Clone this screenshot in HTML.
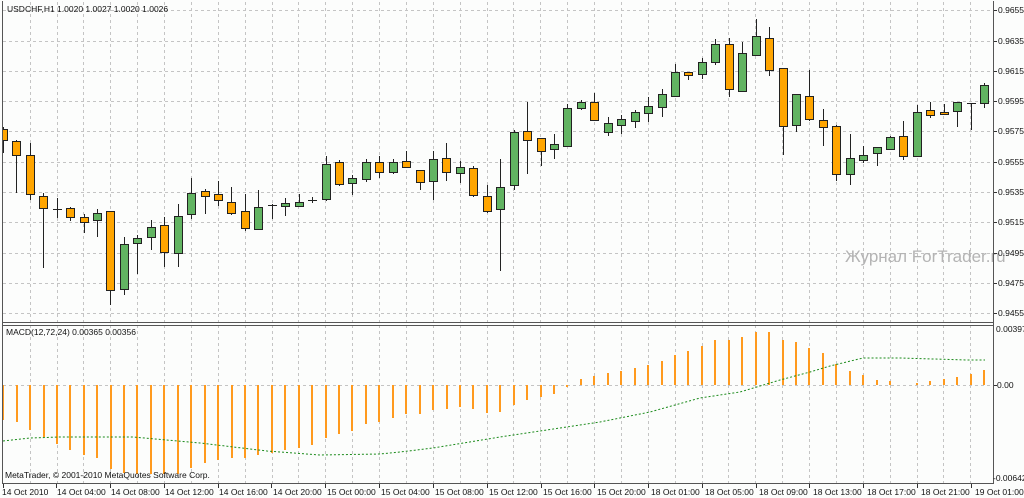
<!DOCTYPE html>
<html><head><meta charset="utf-8"><style>
html,body{margin:0;padding:0;background:#fcfdfc;}
svg{display:block;font-family:"Liberation Sans",sans-serif;}
</style></head><body>
<svg width="1024" height="498" viewBox="0 0 1024 498" xmlns="http://www.w3.org/2000/svg">
<rect width="1024" height="498" fill="#fcfdfc"/>
<defs><clipPath id="cm"><rect x="3" y="2" width="990" height="320"/></clipPath>
<clipPath id="cd"><rect x="3" y="325" width="990" height="158"/></clipPath></defs>
<g stroke="#c4c4c4" stroke-width="1" stroke-dasharray="3,3" fill="none">
<path d="M3 10.5H993M3 41.5H993M3 71.5H993M3 101.5H993M3 131.5H993M3 162.5H993M3 192.5H993M3 222.5H993M3 253.5H993M3 283.5H993M3 313.5H993M3 385.5H993"/>
<path d="M30.5 2V322M57.5 2V322M83.5 2V322M110.5 2V322M137.5 2V322M164.5 2V322M191.5 2V322M218.5 2V322M245.5 2V322M272.5 2V322M298.5 2V322M325.5 2V322M352.5 2V322M379.5 2V322M406.5 2V322M433.5 2V322M460.5 2V322M487.5 2V322M513.5 2V322M540.5 2V322M567.5 2V322M594.5 2V322M621.5 2V322M648.5 2V322M675.5 2V322M702.5 2V322M728.5 2V322M755.5 2V322M782.5 2V322M809.5 2V322M836.5 2V322M863.5 2V322M890.5 2V322M917.5 2V322M943.5 2V322M970.5 2V322"/>
<path d="M30.5 325V483M57.5 325V483M83.5 325V483M110.5 325V483M137.5 325V483M164.5 325V483M191.5 325V483M218.5 325V483M245.5 325V483M272.5 325V483M298.5 325V483M325.5 325V483M352.5 325V483M379.5 325V483M406.5 325V483M433.5 325V483M460.5 325V483M487.5 325V483M513.5 325V483M540.5 325V483M567.5 325V483M594.5 325V483M621.5 325V483M648.5 325V483M675.5 325V483M702.5 325V483M728.5 325V483M755.5 325V483M782.5 325V483M809.5 325V483M836.5 325V483M863.5 325V483M890.5 325V483M917.5 325V483M943.5 325V483M970.5 325V483"/>
</g>
<text x="845" y="262" font-size="17" fill="#b4b4b4">Журнал ForTrader.ru</text>
<g clip-path="url(#cm)" stroke="#222" stroke-width="1">
<g id="wicks">
<path d="M3.5 127V153M16.5 140V193M30.5 143V200M43.5 193V268M57.5 198V218M70.5 207V221M84.5 214V233M97.5 209V237M110.5 211V305M124.5 237V295M137.5 235V274M151.5 220V250M164.5 217V267M178.5 204V267M191.5 178V219M205.5 189V214M218.5 181V206M231.5 187V215M245.5 194V231M258.5 190V230M272.5 204V219M285.5 198V216M299.5 194V207M312.5 197V203M326.5 156V201M339.5 160V186M352.5 175V195M366.5 159V182M379.5 156V178M393.5 159V174M406.5 151V168M420.5 170V190M433.5 151V200M446.5 143V181M460.5 161V183M473.5 166V197M487.5 185V213M500.5 159V271M514.5 130V190M527.5 102V174M541.5 138V166M554.5 134V159M567.5 104V146M581.5 100V110M594.5 93V120M608.5 117V136M621.5 115V134M635.5 110V128M648.5 97V122M662.5 89V117M675.5 64V96M688.5 72V80M702.5 58V79M715.5 39V65M729.5 38V97M742.5 42V91M756.5 19V55M769.5 27V76M783.5 68V155M796.5 94V132M809.5 70V121M823.5 109V146M836.5 125V181M850.5 134V185M863.5 146V163M877.5 147V166M890.5 136V150M903.5 121V160M917.5 105V156M930.5 102V118M944.5 104V115M957.5 102V127M971.5 103V130M984.5 83V108"/>
<path d="M53 209.5H62M268 205.5H277M308 200.5H317M967 103.5H976"/>
</g>
<g fill="#ffa500">
<rect x="-0.5" y="129.5" width="8" height="11"/><rect x="12.5" y="141.5" width="8" height="14"/><rect x="26.5" y="155.5" width="8" height="39"/><rect x="39.5" y="196.5" width="8" height="12"/><rect x="66.5" y="208.5" width="8" height="9"/><rect x="80.5" y="217.5" width="8" height="5"/><rect x="106.5" y="211.5" width="8" height="79"/><rect x="160.5" y="225.5" width="8" height="27"/><rect x="201.5" y="191.5" width="8" height="5"/><rect x="214.5" y="194.5" width="8" height="6"/><rect x="227.5" y="202.5" width="8" height="11"/><rect x="241.5" y="211.5" width="8" height="17"/><rect x="335.5" y="162.5" width="8" height="22"/><rect x="375.5" y="162.5" width="8" height="10"/><rect x="402.5" y="161.5" width="8" height="6"/><rect x="416.5" y="170.5" width="8" height="12"/><rect x="442.5" y="158.5" width="8" height="14"/><rect x="469.5" y="168.5" width="8" height="27"/><rect x="483.5" y="196.5" width="8" height="15"/><rect x="523.5" y="131.5" width="8" height="9"/><rect x="537.5" y="138.5" width="8" height="13"/><rect x="590.5" y="102.5" width="8" height="18"/><rect x="684.5" y="72.5" width="8" height="3"/><rect x="725.5" y="44.5" width="8" height="45"/><rect x="765.5" y="38.5" width="8" height="32"/><rect x="779.5" y="68.5" width="8" height="58"/><rect x="805.5" y="96.5" width="8" height="23"/><rect x="819.5" y="120.5" width="8" height="7"/><rect x="832.5" y="126.5" width="8" height="48"/><rect x="899.5" y="136.5" width="8" height="20"/><rect x="926.5" y="110.5" width="8" height="5"/><rect x="940.5" y="112.5" width="8" height="2"/>
</g>
<g fill="#62b462">
<rect x="93.5" y="213.5" width="8" height="7"/><rect x="120.5" y="244.5" width="8" height="45"/><rect x="133.5" y="238.5" width="8" height="5"/><rect x="147.5" y="227.5" width="8" height="10"/><rect x="174.5" y="216.5" width="8" height="37"/><rect x="187.5" y="193.5" width="8" height="21"/><rect x="254.5" y="207.5" width="8" height="22"/><rect x="281.5" y="203.5" width="8" height="3"/><rect x="295.5" y="202.5" width="8" height="4"/><rect x="322.5" y="164.5" width="8" height="35"/><rect x="348.5" y="178.5" width="8" height="5"/><rect x="362.5" y="162.5" width="8" height="17"/><rect x="389.5" y="162.5" width="8" height="10"/><rect x="429.5" y="159.5" width="8" height="22"/><rect x="456.5" y="167.5" width="8" height="6"/><rect x="496.5" y="187.5" width="8" height="22"/><rect x="510.5" y="132.5" width="8" height="53"/><rect x="550.5" y="144.5" width="8" height="5"/><rect x="563.5" y="108.5" width="8" height="38"/><rect x="577.5" y="102.5" width="8" height="6"/><rect x="604.5" y="123.5" width="8" height="9"/><rect x="617.5" y="119.5" width="8" height="6"/><rect x="631.5" y="112.5" width="8" height="9"/><rect x="644.5" y="106.5" width="8" height="7"/><rect x="658.5" y="94.5" width="8" height="13"/><rect x="671.5" y="72.5" width="8" height="24"/><rect x="698.5" y="62.5" width="8" height="12"/><rect x="711.5" y="44.5" width="8" height="18"/><rect x="738.5" y="53.5" width="8" height="38"/><rect x="752.5" y="36.5" width="8" height="19"/><rect x="792.5" y="94.5" width="8" height="31"/><rect x="846.5" y="158.5" width="8" height="16"/><rect x="859.5" y="155.5" width="8" height="5"/><rect x="873.5" y="147.5" width="8" height="6"/><rect x="886.5" y="137.5" width="8" height="12"/><rect x="913.5" y="112.5" width="8" height="44"/><rect x="953.5" y="102.5" width="8" height="9"/><rect x="980.5" y="85.5" width="8" height="18"/>
</g>
</g>
<g clip-path="url(#cd)" stroke="#ff9a1e" stroke-width="2">
<path d="M3 385V420M17 385V422M30 385V430M44 385V437M57 385V444M70 385V450M84 385V455M97 385V458M111 385V469M124 385V473M137 385V474M151 385V474M164 385V474M178 385V474M191 385V468M205 385V463M218 385V460M232 385V458M245 385V458M258 385V455M272 385V453M285 385V450M299 385V448M312 385V445M326 385V438M339 385V434M352 385V431M366 385V424M379 385V422M393 385V418M406 385V414M420 385V414M433 385V410M447 385V409M460 385V407M473 385V409M487 385V413M500 385V412M514 385V405M527 385V400M541 385V397M554 385V394M567 385V387M581 385V379M594 385V376M608 385V373M621 385V371M635 385V368M648 385V365M662 385V361M675 385V355M688 385V351M702 385V346M715 385V340M729 385V340M742 385V337M756 385V332M769 385V332M783 385V340M796 385V342M809 385V348M823 385V353M836 385V364M850 385V371M863 385V375M877 385V380M890 385V381M917 385V383M930 385V381M944 385V379M957 385V377M971 385V374M984 385V370"/>
</g>
<path d="M3 441L30 438L60 437L133 437L200 443L267 451L320 455L380 454L400 452L433 448L500 437L540 431L600 422L650 412L700 398L740 392L780 380L810 372L830 366L863 358L900 358L967 360L985 360" fill="none" stroke="#1a8a1a" stroke-width="1" stroke-dasharray="2,2"/>
<g stroke="#555" stroke-width="1" fill="none">
<path d="M2.5 1V484M993.5 1V484M2 322.5H994M2 325.5H994M2 483.5H994"/>
</g>
<g stroke="#333" stroke-width="1">
<path d="M994 10.5h3M994 41.5h3M994 71.5h3M994 101.5h3M994 131.5h3M994 162.5h3M994 192.5h3M994 222.5h3M994 253.5h3M994 283.5h3M994 313.5h3M994 385.5h3"/>
<path d="M3.5 484v4M56.5 484v4M110.5 484v4M164.5 484v4M218.5 484v4M271.5 484v4M325.5 484v4M379.5 484v4M433.5 484v4M487.5 484v4M541.5 484v4M594.5 484v4M648.5 484v4M702.5 484v4M756.5 484v4M809.5 484v4M863.5 484v4M917.5 484v4M971.5 484v4"/>
</g>
<g font-size="8.5" fill="#111">
<text x="7" y="12">USDCHF,H1  1.0020 1.0027 1.0020 1.0026</text>
<text x="6" y="335">MACD(12,72,24) 0.00365 0.00356</text>
<text x="5" y="478">MetaTrader, © 2001-2010 MetaQuotes Software Corp.</text>
<text x="998" y="13">0.9655</text><text x="998" y="44">0.9635</text><text x="998" y="74">0.9615</text><text x="998" y="104">0.9595</text><text x="998" y="134">0.9575</text><text x="998" y="165">0.9555</text><text x="998" y="195">0.9535</text><text x="998" y="225">0.9515</text><text x="998" y="256">0.9495</text><text x="998" y="286">0.9475</text><text x="998" y="316">0.9455</text>
<text x="996" y="332">0.00397</text><text x="997" y="388">0.00</text><text x="993" y="481">-0.00642</text>
<g>
<text x="2" y="495">14 Oct 2010</text><text x="57" y="495">14 Oct 04:00</text><text x="111" y="495">14 Oct 08:00</text><text x="165" y="495">14 Oct 12:00</text><text x="219" y="495">14 Oct 16:00</text><text x="273" y="495">14 Oct 20:00</text><text x="327" y="495">15 Oct 00:00</text><text x="381" y="495">15 Oct 04:00</text><text x="435" y="495">15 Oct 08:00</text><text x="489" y="495">15 Oct 12:00</text><text x="543" y="495">15 Oct 16:00</text><text x="597" y="495">15 Oct 20:00</text><text x="651" y="495">18 Oct 01:00</text><text x="705" y="495">18 Oct 05:00</text><text x="759" y="495">18 Oct 09:00</text><text x="813" y="495">18 Oct 13:00</text><text x="867" y="495">18 Oct 17:00</text><text x="921" y="495">18 Oct 21:00</text><text x="975" y="495">19 Oct 01:00</text>
</g>
</g>
</svg>
</body></html>
